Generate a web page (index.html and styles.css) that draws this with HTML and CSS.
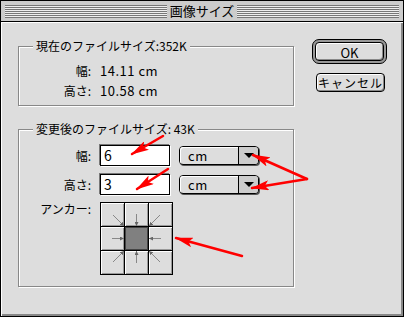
FILE: index.html
```html
<!DOCTYPE html>
<html lang="ja">
<head>
  <meta charset="UTF-8">
  <title>画像サイズ</title>
  <link rel="stylesheet" href="styles.css">
</head>
<body>

  <div class="window">
    <div class="title-bar">
      <div class="stripes"></div>
      <span class="title">画像サイズ</span>
      <div class="stripes"></div>
    </div>

    <div class="content">
      <div class="main-col">
        <div class="group group-current">
          <span class="group-title">現在のファイルサイズ:352K</span>
          <div class="info-grid">
            <span class="label">幅:</span>
            <span class="value">14.11 cm</span>
            <span class="label">高さ:</span>
            <span class="value">10.58 cm</span>
          </div>
        </div>

        <div class="group group-new">
          <span class="group-title">変更後のファイルサイズ: 43K</span>
          <div class="form-row">
            <span class="label">幅:</span>
            <div class="field">6</div>
            <div class="popup"><span class="popup-label">cm</span><span class="popup-arrow"></span></div>
          </div>
          <div class="form-row">
            <span class="label">高さ:</span>
            <div class="field">3</div>
            <div class="popup"><span class="popup-label">cm</span><span class="popup-arrow"></span></div>
          </div>
          <div class="form-row anchor-row">
            <span class="label">アンカー:</span>
            <div class="anchor">
              <div class="cell"></div><div class="cell"></div><div class="cell"></div>
              <div class="cell"></div><div class="cell center"></div><div class="cell"></div>
              <div class="cell"></div><div class="cell"></div><div class="cell"></div>
              <svg class="rays" width="73" height="73" viewBox="0 0 73 73">
                <defs>
                  <marker id="ray-head" viewBox="0 0 6 6" refX="6" refY="3" markerWidth="4" markerHeight="4" orient="auto">
                    <path d="M0,0 L6,3 L0,6 z" fill="#666"/>
                  </marker>
                </defs>
                <g stroke="#888" stroke-width="1" marker-end="url(#ray-head)">
                  <line x1="36.5" y1="12" x2="36.5" y2="24"/>
                  <line x1="36.5" y1="61" x2="36.5" y2="49"/>
                  <line x1="12" y1="36.5" x2="24" y2="36.5"/>
                  <line x1="61" y1="36.5" x2="49" y2="36.5"/>
                  <line x1="13" y1="13" x2="24" y2="24"/>
                  <line x1="60" y1="13" x2="49" y2="24"/>
                  <line x1="13" y1="60" x2="24" y2="49"/>
                  <line x1="60" y1="60" x2="49" y2="49"/>
                </g>
              </svg>
            </div>
          </div>
        </div>
      </div>

      <div class="button-col">
        <div class="default-ring">
          <button class="btn">OK</button>
        </div>
        <button class="btn btn-cancel">キャンセル</button>
      </div>
    </div>

    <!-- red annotation arrows -->
    <svg class="annotations" width="404" height="317" viewBox="0 0 404 317">
      <defs>
        <marker id="red-head" viewBox="0 0 18 10" refX="17" refY="5" markerWidth="18" markerHeight="10" markerUnits="userSpaceOnUse" orient="auto">
          <path d="M0,0 L18,5 L0,10 L4,5 z" fill="#f00"/>
        </marker>
      </defs>
      <g stroke="#f00" stroke-width="2.5" stroke-linecap="round" marker-end="url(#red-head)">
        <line x1="163" y1="136" x2="132" y2="154"/>
        <line x1="168" y1="169" x2="137" y2="189"/>
        <line x1="307" y1="179" x2="253" y2="155"/>
        <line x1="307" y1="179" x2="252" y2="188"/>
        <line x1="242" y1="256" x2="176" y2="238"/>
      </g>
    </svg>
  </div>

</body>
</html>
```

FILE: styles.css
```css
body {
  margin: 0;
  font-family: 'Noto Sans CJK JP', 'DejaVu Sans', sans-serif;
  font-size: 12px;
  color: #000;
  background: #fff;
}

.window {
  position: relative;
  width: 404px;
  height: 317px;
  box-sizing: border-box;
  border: 1px solid #000;
  background: #ddd;
}

.title-bar {
  display: flex;
  align-items: center;
  height: 20px;
  padding: 0 4px;
  background: #ccc;
  border-bottom: 1px solid #000;
}

.stripes {
  flex: 1;
  height: 13px;
  background: repeating-linear-gradient(to bottom, #777 0 1px, #eee 1px 2px);
}

.title {
  padding: 0 3px;
  font-size: 13px;
  line-height: 20px;
}

.content {
  display: flex;
  height: 294px;
  box-sizing: border-box;
  padding-left: 17px;
  box-shadow: inset 1px 1px 0 #fff, inset -2px -2px 0 #888;
}

.main-col {
  width: 276px;
}

.group {
  box-sizing: border-box;
  border: 1px solid #888;
  box-shadow: inset 1px 1px 0 #fff, 1px 1px 0 #fff;
}

.group-current {
  margin-top: 24px;
  height: 60px;
}

.group-new {
  margin-top: 23px;
  height: 158px;
}

.group-title {
  display: block;
  width: fit-content;
  height: 14px;
  line-height: 14px;
  margin: -8px 0 0 14px;
  padding: 0 3px;
  background: #ddd;
}

.info-grid {
  display: grid;
  grid-template-columns: 72px auto;
  column-gap: 9px;
  grid-auto-rows: 20px;
  align-items: center;
  margin-top: 7px;
}

.value {
  font-size: 13px;
  letter-spacing: 0.5px;
}

.label {
  text-align: right;
}

.form-row {
  display: grid;
  grid-template-columns: 72px 70px 80px;
  column-gap: 9px;
  align-items: center;
  margin-top: 8px;
}

.group-new .form-row:first-of-type {
  margin-top: 9px;
}

.field {
  height: 21px;
  box-sizing: border-box;
  border: 1px solid #000;
  box-shadow: -1px -1px 0 #777, 1px 1px 0 #fff;
  background: #fff;
  padding-left: 3px;
  font-size: 14px;
  line-height: 19px;
}

.popup {
  display: flex;
  height: 19px;
  box-sizing: border-box;
  border: 1px solid #000;
  border-radius: 4px;
  background: #ddd;
  box-shadow: 1px 1px 0 #555;
}

.popup-label {
  flex: 1;
  padding-left: 8px;
  line-height: 17px;
  font-size: 13px;
  letter-spacing: 0.5px;
  border-radius: 3px 0 0 3px;
  box-shadow: inset 1px 1px 0 #fff;
}

.popup-arrow {
  width: 19px;
  border-left: 1px solid #000;
  display: flex;
  align-items: center;
  justify-content: center;
  background: #ccc;
  border-radius: 0 3px 3px 0;
}

.popup-arrow::after {
  content: "";
  border-left: 5px solid transparent;
  border-right: 5px solid transparent;
  border-top: 5px solid #000;
}

.anchor-row {
  align-items: start;
  margin-top: 7px;
}

.anchor-row .label {
  line-height: 14px;
}

.anchor {
  position: relative;
  display: grid;
  grid-template-columns: repeat(3, 23px);
  grid-template-rows: repeat(3, 23px);
  gap: 1px;
  width: 73px;
  height: 73px;
  box-sizing: border-box;
  border: 1px solid #000;
  background: #000;
}

.cell {
  background: #ddd;
  box-shadow: inset 1px 1px 0 #fff, inset -1px -1px 0 #999;
}

.cell.center {
  background: #808080;
  box-shadow: inset 0 0 0 1px #444;
}

.rays {
  position: absolute;
  top: -1px;
  left: -1px;
}

.button-col {
  margin-left: 18px;
  margin-top: 17px;
}

.btn {
  display: block;
  box-sizing: border-box;
  border: 1px solid #000;
  border-radius: 4px;
  background: #ddd;
  box-shadow: inset 1px 1px 0 #fff, inset -1px -1px 0 #888;
  font-family: inherit;
  font-size: 12px;
  color: #000;
  padding: 0;
}

.default-ring {
  width: 75px;
  height: 25px;
  box-sizing: border-box;
  border: 1px solid #000;
  border-radius: 7px;
  padding: 2px;
  background: #999;
}

.default-ring .btn {
  width: 100%;
  height: 100%;
  font-size: 13px;
}

.btn-cancel {
  width: 69px;
  height: 19px;
  margin: 9px 0 0 4px;
  line-height: 17px;
  letter-spacing: 1px;
}

.annotations {
  position: absolute;
  top: -1px;
  left: -1px;
  pointer-events: none;
}
```
